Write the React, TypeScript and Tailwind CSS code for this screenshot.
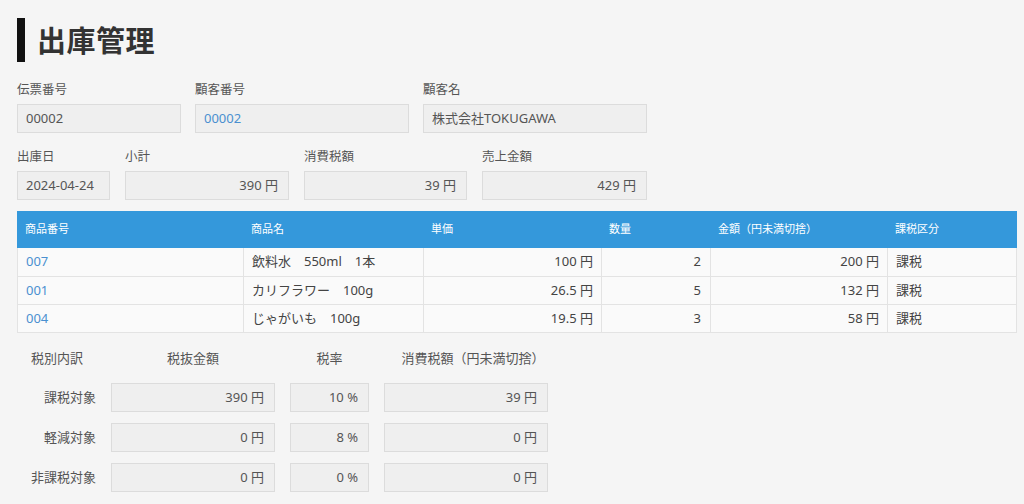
import React from 'react'

const field = 'h-[29px] flex items-center px-2 bg-[#efefef] border border-[#dcdcdc] text-[13px]'
const label = 'text-[12.5px] text-[#555] h-[16px] leading-[16px] mb-[6px]'

const items = [
  { code: '007', name: '飲料水　550ml　1本', price: '100 円', qty: '2', amount: '200 円', tax: '課税' },
  { code: '001', name: 'カリフラワー　100g', price: '26.5 円', qty: '5', amount: '132 円', tax: '課税' },
  { code: '004', name: 'じゃがいも　100g', price: '19.5 円', qty: '3', amount: '58 円', tax: '課税' },
]

const taxRows = [
  { label: '課税対象', base: '390 円', rate: '10 %', tax: '39 円' },
  { label: '軽減対象', base: '0 円', rate: '8 %', tax: '0 円' },
  { label: '非課税対象', base: '0 円', rate: '0 %', tax: '0 円' },
]

const cols = 'grid grid-cols-[226px_180px_178px_109px_177px_130px]'

export default function App() {
  return (
    <div
      className="min-h-screen w-[1024px] h-[504px] overflow-hidden bg-[#f5f5f5] px-[17px] text-[#555]"
      style={{ fontFamily: '"Noto Sans", "Noto Sans CJK JP", sans-serif' }}
    >
      <div className="flex items-center h-[44px] mt-[18px] mb-[20px]">
        <div className="w-[8px] h-[44px] bg-[#111]" />
        <h1 className="ml-[12px] text-[29px] font-bold text-[#333] leading-none tracking-[0.5px]">出庫管理</h1>
      </div>

      <div className="flex gap-[14px]">
        <div>
          <div className={label}>伝票番号</div>
          <div className={`${field} w-[164px]`}>00002</div>
        </div>
        <div>
          <div className={label}>顧客番号</div>
          <div className={`${field} w-[214px] text-[#4a90d0]`}>00002</div>
        </div>
        <div>
          <div className={label}>顧客名</div>
          <div className={`${field} w-[224px]`}>株式会社TOKUGAWA</div>
        </div>
      </div>

      <div className="flex gap-[15px] mt-[16px]">
        <div>
          <div className={label}>出庫日</div>
          <div className={`${field} w-[93px]`}>2024-04-24</div>
        </div>
        <div>
          <div className={label}>小計</div>
          <div className={`${field} w-[164px] justify-end pr-[10px]`}>390 円</div>
        </div>
        <div>
          <div className={label}>消費税額</div>
          <div className={`${field} w-[163px] justify-end pr-[10px]`}>39 円</div>
        </div>
        <div>
          <div className={label}>売上金額</div>
          <div className={`${field} w-[165px] justify-end pr-[10px]`}>429 円</div>
        </div>
      </div>

      <div className="mt-[11px] w-[1000px] border-b border-[#e3e3e3]">
        <div className={`${cols} h-[37px] bg-[#3498db] text-white text-[11px] items-center`}>
          <div className="pl-2">商品番号</div>
          <div className="pl-2">商品名</div>
          <div className="pl-2">単価</div>
          <div className="pl-2">数量</div>
          <div className="pl-2">金額（円未満切捨）</div>
          <div className="pl-2">課税区分</div>
        </div>
        {items.map((it, i) => (
          <div
            key={it.code}
            className={`${cols} h-[28px] bg-[#fafafa] text-[13px] text-[#444] ${i > 0 ? 'border-t border-[#e3e3e3]' : ''}`}
          >
            <div className="pl-2 flex items-center text-[#4a90d0] border-l border-[#e3e3e3]">{it.code}</div>
            <div className="pl-2 flex items-center border-l border-[#e3e3e3]">{it.name}</div>
            <div className="pr-2 flex items-center justify-end border-l border-[#e3e3e3]">{it.price}</div>
            <div className="pr-[9px] flex items-center justify-end border-l border-[#e3e3e3]">{it.qty}</div>
            <div className="pr-2 flex items-center justify-end border-l border-[#e3e3e3]">{it.amount}</div>
            <div className="pl-2 flex items-center border-l border-r border-[#e3e3e3]">{it.tax}</div>
          </div>
        ))}
      </div>

      <div className="ml-[14px] mt-[16px] text-[13px] text-[#555]">
        <div className="grid grid-cols-[65px_164px_79px_164px] gap-x-[15px] items-center h-[18px]">
          <div>税別内訳</div>
          <div className="text-center">税抜金額</div>
          <div className="text-center">税率</div>
          <div className="text-center pl-[14px]">消費税額（円未満切捨）</div>
        </div>
        <div className="mt-[16px] flex flex-col gap-[11px]">
          {taxRows.map((r) => (
            <div key={r.label} className="grid grid-cols-[65px_164px_79px_164px] gap-x-[15px] items-center">
              <div className="text-right">{r.label}</div>
              <div className={`${field} justify-end pr-[10px]`}>{r.base}</div>
              <div className={`${field} justify-end pr-[10px]`}>{r.rate}</div>
              <div className={`${field} justify-end pr-[10px]`}>{r.tax}</div>
            </div>
          ))}
        </div>
      </div>
    </div>
  )
}
